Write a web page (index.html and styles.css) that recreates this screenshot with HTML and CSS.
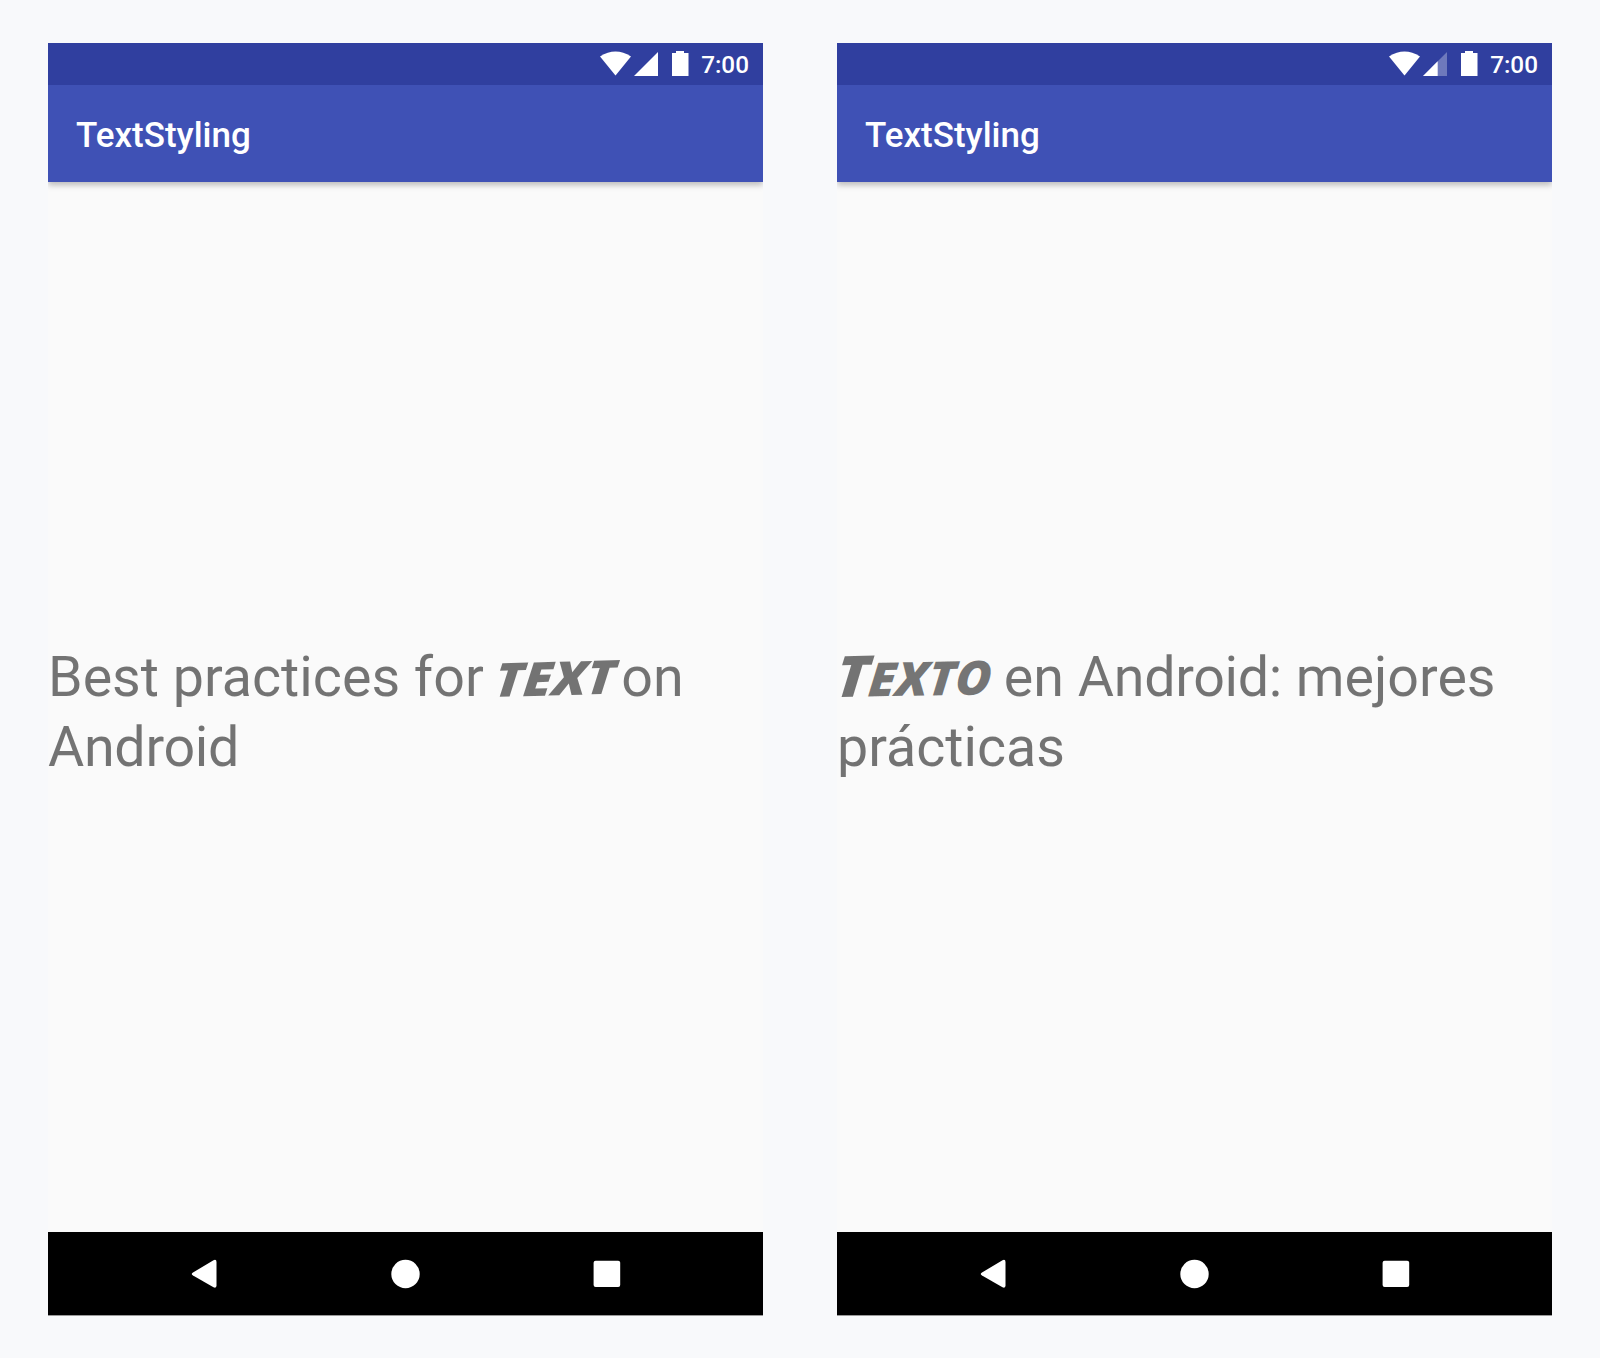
FILE: index.html
```html
<!DOCTYPE html>
<html lang="en">
<head>
<meta charset="utf-8">
<title>TextStyling</title>
<link rel="stylesheet" href="styles.css">
</head>
<body>
<main class="screens">
  <section class="phone">
    <div class="status">
      <svg class="status-icons" viewBox="0 0 90 26" aria-hidden="true">
        <path d="M0 5.5Q15.500-4.500 31 5.500L15.500 24.500Z"/>
        <path d="M34 25H58V1Z"/>
        <path d="M72 2H76V0H84V2H88.500V25H72Z"/>
      </svg>
      <span class="clock">7:00</span>
    </div>
    <header class="appbar">TextStyling</header>
    <div class="content">
      <p class="message">Best practices for <span class="marker marker-en">text</span> on<br><span class="tight">Android</span></p>
    </div>
    <nav class="navbar">
      <svg viewBox="0 0 715 84" aria-hidden="true">
        <path d="M145 40.500L165.500 28.200Q168.500 27 168.500 30V53.500Q168.500 56.500 165.500 55.300L145 43.500Q142.500 42 145 40.500Z"/>
        <circle cx="357.500" cy="42" r="14.200"/>
        <rect x="545.600" y="28.700" width="26.600" height="26.400" rx="2"/>
      </svg>
    </nav>
  </section>
  <section class="phone" lang="es">
    <div class="status">
      <svg class="status-icons" viewBox="0 0 90 26" aria-hidden="true">
        <path d="M0 5.5Q15.500-4.500 31 5.500L15.500 24.500Z"/>
        <path class="faint" d="M34 25H58V1Z"/>
        <path d="M34 25H48.700V10.300Z"/>
        <path d="M72 2H76V0H84V2H88.500V25H72Z"/>
      </svg>
      <span class="clock">7:00</span>
    </div>
    <header class="appbar">TextStyling</header>
    <div class="content">
      <p class="message"><span class="marker marker-es">Texto</span> en <span class="tight">Android:</span> mejores<br>prácticas</p>
    </div>
    <nav class="navbar">
      <svg viewBox="0 0 715 84" aria-hidden="true">
        <path d="M145 40.500L165.500 28.200Q168.500 27 168.500 30V53.500Q168.500 56.500 165.500 55.300L145 43.500Q142.500 42 145 40.500Z"/>
        <circle cx="357.500" cy="42" r="14.200"/>
        <rect x="545.600" y="28.700" width="26.600" height="26.400" rx="2"/>
      </svg>
    </nav>
  </section>
</main>
</body>
</html>
```
FILE: styles.css
```css
* { box-sizing: border-box; }
body {
  margin: 0;
  background: #f8f9fb;
  font-family: Roboto, sans-serif;
}
.screens {
  display: flex;
  gap: 74px;
  height: 1358px;
  padding: 43px 48px 42px;
}
.phone {
  display: flex;
  flex-direction: column;
  width: 715px;
  height: 1273px;
  background: #fafafa;
}
.status {
  display: flex;
  justify-content: flex-end;
  height: 42px;
  padding: 8px 14px 0 0;
  background: #303f9f;
  color: #fff;
}
.status-icons {
  width: 90px;
  height: 26px;
  margin-right: 11px;
  fill: #fff;
}
.faint { opacity: .3; }
.clock {
  font-size: 24.3px;
  font-weight: 500;
  line-height: 28px;
}
.appbar {
  height: 97px;
  padding-left: 28px;
  background: #3f51b5;
  box-shadow: 0 3px 6px rgba(0, 0, 0, .26);
  clip-path: inset(0 0 -14px);
  color: #fff;
  font-size: 35px;
  font-weight: 500;
  line-height: 102px;
}
.content {
  display: flex;
  flex: 1;
  align-items: center;
  padding-top: 10px;
}
.message {
  margin: 0;
  color: rgba(0, 0, 0, .54);
  font-size: 55.6px;
  line-height: 70px;
  white-space: nowrap;
}
.tight { letter-spacing: -.3px; }
.marker {
  display: inline-block;
  font-family: "Open Sans", sans-serif;
  font-size: 47px;
  font-style: italic;
  font-weight: 800;
  line-height: 60px;
  text-transform: uppercase;
  transform-origin: 0 75%;
}
.marker-en {
  width: 110px;
  transform: translate(-4px, 1px) skewY(-1.500deg) skewX(-5deg) scaleX(1.1);
}
.marker-es {
  width: 153px;
  transform: translate(-2px, 1px) skewY(-1deg) skewX(-5deg) scaleX(1.04);
}
.marker-es::first-letter { font-size: 57px; }
.navbar {
  height: 84px;
  background: #000;
  border-bottom: 1px solid #999;
}
.navbar svg {
  display: block;
  width: 715px;
  height: 84px;
  fill: #fff;
}
```
